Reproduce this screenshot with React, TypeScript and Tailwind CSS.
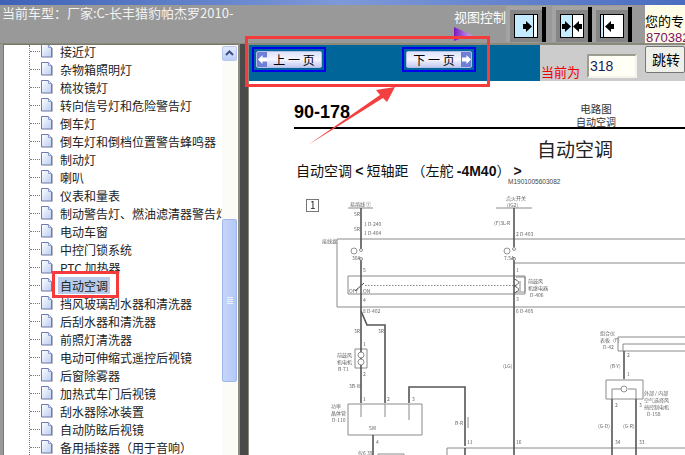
const treeItems = [
  "接近灯",
  "杂物箱照明灯",
  "梳妆镜灯",
  "转向信号灯和危险警告灯",
  "倒车灯",
  "倒车灯和倒档位置警告蜂鸣器",
  "制动灯",
  "喇叭",
  "仪表和量表",
  "制动警告灯、燃油滤清器警告灯",
  "电动车窗",
  "中控门锁系统",
  "PTC 加热器",
  "自动空调",
  "挡风玻璃刮水器和清洗器",
  "后刮水器和清洗器",
  "前照灯清洗器",
  "电动可伸缩式遥控后视镜",
  "后窗除雾器",
  "加热式车门后视镜",
  "刮水器除冰装置",
  "自动防眩后视镜",
  "备用插接器（用于音响）",
];

function PageIcon() {
  return (
    <svg width="13" height="14" viewBox="0 0 13 14" className="shrink-0">
      <defs>
        <linearGradient id="pg" x1="0" y1="0" x2="1" y2="1">
          <stop offset="0" stopColor="#ffffff" />
          <stop offset="1" stopColor="#b9cdf2" />
        </linearGradient>
      </defs>
      <path d="M1.5 0.5H8.5L11.5 3.5V13H1.5Z" fill="url(#pg)" stroke="#6c79b4" />
      <path d="M8.5 0.5V3.5H11.5" fill="#dfe7fa" stroke="#8f9ccc" />
      <path d="M2 13.5H12.5V4" fill="none" stroke="#b8b8c4" />
    </svg>
  );
}

function Tri({ dir }: { dir: string }) {
  return (
    <svg width="9" height="11" viewBox="0 0 9 11">
      {dir === "right" ? <path d="M0 3H3V0L9 5.5L3 11V8H0Z" fill="#000" /> : <path d="M9 3H6V0L0 5.5L6 11V8H9Z" fill="#000" />}
    </svg>
  );
}

function ViewButton({ kind }: { kind: string }) {
  return (
    <div className="relative w-[40px] h-[36px] bg-[#a3a3a3] pl-[4px] pt-[4px]">
      <div className="w-[32px] h-[32px] bg-[#858585] pl-[4px] pt-[4px]">
        <div className="flex w-[24px] h-[24px] border border-black bg-white">
          {kind === "split" && (
            <>
              <div className="flex-1 bg-[#c4ebff] flex items-center justify-center border-r border-black">
                <Tri dir="right" />
              </div>
              <div className="flex-1 bg-white flex items-center justify-center">
                <Tri dir="left" />
              </div>
            </>
          )}
          {kind === "wide" && (
            <>
              <div className="flex-1 bg-[#c4ebff] flex items-center justify-end pr-[1px] border-r border-black">
                <Tri dir="right" />
              </div>
              <div className="w-[3px] bg-white" />
            </>
          )}
          {kind === "narrow" && (
            <>
              <div className="w-[3px] bg-[#c4ebff] border-r border-black" />
              <div className="flex-1 bg-white flex items-center justify-start pl-[1px]">
                <Tri dir="left" />
              </div>
            </>
          )}
        </div>
      </div>
      <div className="absolute right-0 top-[1px] bottom-0 w-[4px] bg-black" />
    </div>
  );
}

function PagerButton({ label, prev }: { label: string; prev?: boolean }) {
  const arrow = (
    <div className="w-[10px] h-full bg-[#6f7fd8] flex items-center justify-center">
      <svg width="9" height="9" viewBox="0 0 9 9">
        {prev ? <path d="M0 4.5L4.5 0V2.5H9V6.5H4.5V9Z" fill="#fff" /> : <path d="M9 4.5L4.5 0V2.5H0V6.5H4.5V9Z" fill="#fff" />}
      </svg>
    </div>
  );
  return (
    <div className="w-[74px] h-[25px] border-[2px] border-[#0000ee] p-[2px] bg-[#006699]">
      <div className="flex items-center h-full rounded-[2px] border border-[#b5bde8] bg-gradient-to-b from-[#dfe3fb] via-[#f4f5fe] to-[#c3c9f0] overflow-hidden">
        {prev && arrow}
        <span className="flex-1 text-center text-[12px] leading-none text-black whitespace-pre">{label}</span>
        {!prev && arrow}
      </div>
    </div>
  );
}

function WiringDiagram() {
  const wire = "#555";
  const thin = "#8a8a8a";
  const label = { fontSize: 5, fill: "#666" };
  return (
    <svg width="436" height="265" viewBox="249 190 436 265" className="block mt-[5px] blur-[0.5px]">
      <rect x="306.5" y="198.5" width="12" height="12" fill="#fff" stroke="#777" />
      <text x="310" y="208" fontSize="10" fill="#222">1</text>

      <g fill="none" stroke={thin} strokeWidth="1">
        <path d="M348 207H373" />
        <path d="M337 306V238H685" />
        <path d="M337 306H685" />
        <path d="M525 293H348V275H525" />
        <path d="M525 275V293" />
        <path d="M355 348H367V367H355Z" />
        <path d="M348 403H422V434H348Z" />
        <path d="M447 455V447H685" />
        <path d="M496 207H532" />
        <path d="M514 262H685" />
        <path d="M685 336H618V350H685" />
        <path d="M623 350V343H685" />
        <path d="M606 379H643V398H606Z" />
        <path d="M612 388H623M628 388H636V398M612 388V398" />
        <path d="M378 455V453H404V455" />
        <path d="M364 282L355 290" stroke="#444" />
        <path d="M365 284.5H515" strokeDasharray="1.5 1.5" />
        <path d="M520 280V290M516 276H525V291H516" />
        <path d="M361 403V416M385 403V416M409 403V419" />
        <path d="M468 416V427" />
      </g>

      <g fill="none" stroke={wire} strokeWidth="1.6">
        <path d="M361 207V248M361 258V402" />
        <path d="M361 310L367 324H385V402" />
        <path d="M409 402V386H465V445" />
        <path d="M373 434V455" />
        <path d="M514 207V246M514 256V447" />
        <path d="M465 447V455M514 447V455M612 447V455M636 447V455" />
        <path d="M624 350V378" />
        <path d="M612 398V447M636 398V447" />
      </g>

      <g fill="#fff" stroke="#666" strokeWidth="0.7">
        <circle cx="361" cy="249" r="1.5" />
        <circle cx="361" cy="258" r="1.5" />
        <circle cx="514" cy="248" r="1.5" />
        <circle cx="514" cy="258" r="1.5" />
        <circle cx="354" cy="250" r="3" />
        <circle cx="507" cy="250" r="3" />
        <circle cx="361" cy="354" r="3" />
        <circle cx="361" cy="361" r="3" />
        <circle cx="624" cy="388" r="3" />
      </g>

      <path d="M514 278C520 280 520 283 514 285C520 287 520 290 514 292" fill="none" stroke="#555" />

      <g {...label} fontFamily="Noto Sans CJK SC, sans-serif">
        <text x="350" y="205">易熔线 ⑦</text>
        <text x="354" y="215">5R</text>
        <text x="354" y="230">5R</text>
        <text x="364" y="225">1 D-240</text>
        <text x="364" y="234">1 D-404</text>
        <text x="322" y="242">接线盒</text>
        <text x="352" y="259">30A</text>
        <text x="363" y="271">5</text>
        <text x="349" y="292">OFF</text>
        <text x="363" y="292">ON</text>
        <text x="363" y="301">4</text>
        <text x="363" y="312">8 D-402</text>
        <text x="354" y="332">3R</text>
        <text x="378" y="332">3R</text>
        <text x="363" y="345">1</text>
        <text x="337" y="356">前鼓风</text>
        <text x="337" y="363">机电机</text>
        <text x="338" y="370">B-71</text>
        <text x="363" y="375">2</text>
        <text x="349" y="387">3B-W</text>
        <text x="363" y="400">1</text>
        <text x="387" y="400">2</text>
        <text x="412" y="400">3</text>
        <text x="331" y="407">功率</text>
        <text x="331" y="414">晶体管</text>
        <text x="332" y="421">D-110</text>
        <text x="369" y="429">5W</text>
        <text x="376" y="443">4</text>
        <text x="358" y="454">仅6 39</text>
        <text x="455" y="424">B-R</text>
        <text x="467" y="443">11</text>
        <text x="506" y="199">点火开关</text>
        <text x="507" y="206">(IG2)</text>
        <text x="494" y="224">(F)3L-R</text>
        <text x="516" y="235">2 D-403</text>
        <text x="504" y="259">7.5A</text>
        <text x="516" y="271">1</text>
        <text x="528" y="282">前鼓风</text>
        <text x="528" y="289">机继电器</text>
        <text x="530" y="296">D-406</text>
        <text x="516" y="300">3</text>
        <text x="516" y="312">6 D-405</text>
        <text x="503" y="367">(LG)</text>
        <text x="516" y="443">16</text>
        <text x="600" y="334">组合仪</text>
        <text x="600" y="341">表板（F）</text>
        <text x="603" y="348">D-42</text>
        <text x="627" y="356">2</text>
        <text x="610" y="367">(B-Y)</text>
        <text x="627" y="375">1</text>
        <text x="644" y="394">外部 / 内部</text>
        <text x="644" y="401">空气选择风</text>
        <text x="644" y="408">挡控制电机</text>
        <text x="647" y="415">D-158</text>
        <text x="615" y="406">2</text>
        <text x="639" y="406">3</text>
        <text x="598" y="427">(G-D)</text>
        <text x="623" y="427">(G-R)</text>
        <text x="615" y="443">34</text>
        <text x="639" y="443">33</text>
      </g>
    </svg>
  );
}

export default function App() {
  return (
    <div className="relative w-[685px] h-[455px] overflow-hidden bg-[#999999] font-['Noto_Sans_CJK_SC','Noto_Sans',sans-serif]">
      <div className="h-[5px] bg-gradient-to-r from-[#3f62b8] via-[#7e99d8] to-[#4a6cc0]" />

      <div className="flex h-[38px]">
        <div className="w-[454px] pl-[2px] text-[13px] leading-[16px] text-[#f2f2f2] whitespace-nowrap">
          当前车型：厂家:C-长丰猎豹帕杰罗2010-
        </div>
        <div className="w-[52px] pt-[3px] text-[13px] leading-[18px] text-white whitespace-nowrap">视图控制</div>
        <div className="flex items-end h-[37px]">
          <ViewButton kind="wide" />
          <div className="w-[6px]" />
          <ViewButton kind="split" />
          <ViewButton kind="narrow" />
        </div>
        <div className="ml-[13px] flex-1 bg-[#fffde8] overflow-hidden text-[13px] leading-[17px] pt-[7px] whitespace-nowrap">
          <div className="text-black">您的专</div>
          <div className="pl-[1px] text-[#80106a] font-['Liberation_Sans',sans-serif]">870382</div>
        </div>
      </div>

      <div className="flex h-[412px] border-t border-[#8a8a78]">
        <div className="relative w-[235px] ml-[3px] border-l border-t border-[#77776a] bg-white flex overflow-hidden">
          <div className="relative flex-1 min-w-0 overflow-hidden">
            <div className="absolute left-[25px] top-0 bottom-0 border-l border-dotted border-[#777]" />
            <div className="-mt-[3px]">
              {treeItems.map((item) => (
                <div key={item} className="flex items-center h-[18px] pl-[26px]">
                  <div className="w-[10px] shrink-0 border-t border-dotted border-[#777]" />
                  <PageIcon />
                  <span
                    className={
                      item === "自动空调"
                        ? "ml-[5px] px-[2px] shrink-0 bg-[#b9cdea] text-[12px] leading-[17px] text-[#222] whitespace-nowrap"
                        : "ml-[7px] shrink-0 text-[12px] leading-[17px] text-[#222] whitespace-nowrap"
                    }
                  >
                    {item}
                  </span>
                </div>
              ))}
            </div>
          </div>
          <div className="flex flex-col w-[15px] shrink-0 mr-[1px] bg-[#fbfbf7]">
            <div className="h-[15px] mt-[1px] rounded-[2px] border border-[#b8c8ee] bg-gradient-to-b from-[#e3ebfd] to-[#bccdf6] flex items-center justify-center">
              <svg width="9" height="7" viewBox="0 0 9 7">
                <path d="M1 5L4.5 1.5L8 5" fill="none" stroke="#3c4f87" strokeWidth="2" />
              </svg>
            </div>
            <div className="h-[158px]" />
            <div className="flex flex-col items-center justify-center gap-[1px] h-[163px] rounded-[2px] border border-[#9fb6ea] bg-gradient-to-r from-[#c6d6fa] to-[#b3c8f6]">
              <div className="w-[6px] h-[1px] bg-[#eef2fd]" />
              <div className="w-[6px] h-[1px] bg-[#eef2fd]" />
              <div className="w-[6px] h-[1px] bg-[#eef2fd]" />
              <div className="w-[6px] h-[1px] bg-[#eef2fd]" />
            </div>
          </div>
        </div>

        <div className="w-[2px] bg-[#8c8c80]" />
        <div className="w-[8px] bg-[#4a4a4a]" />

        <div className="flex-1 min-w-0 border-l border-[#8a8a80] border-t">
          <div className="flex h-[36px] bg-[#006699]">
            <div className="flex items-start flex-1 pl-[3px] pt-[2px]">
              <PagerButton label="上 一 页" prev />
              <div className="w-[76px]" />
              <PagerButton label="下 一 页" />
            </div>
            <div className="relative w-[145px] bg-[#cccccc] flex items-start">
              <span className="mt-[18px] ml-[1px] text-[13px] leading-[18px] text-[#f00000] whitespace-nowrap">当前为</span>
              <div className="mt-[9px] ml-[7px] w-[53px] h-[24px] border-2 border-t-[#9c9c90] border-l-[#9c9c90] border-r-[#f4f4ea] border-b-[#f4f4ea] bg-[#fffff6] pl-[1px] text-[14px] leading-[20px] text-[#1a1a60] font-['Liberation_Sans',sans-serif]">
                318
              </div>
              <div className="mt-[1px] ml-[8px] w-[40px] h-[27px] shrink-0 border border-[#777] rounded-[2px] bg-[#f0f0ea] text-[14px] leading-[24px] pl-[6px] text-black whitespace-nowrap">
                跳转
              </div>
            </div>
          </div>

          <div className="h-[376px] bg-white overflow-hidden">
            <div className="flex h-[48px] ml-[45px] border-b-[2px] border-black">
              <div className="w-[279px] pt-[20px] text-[18px] leading-[22px] font-bold text-black font-['Liberation_Sans',sans-serif]">
                90-178
              </div>
              <div className="w-[46px] pt-[21px] text-center text-[#333] whitespace-nowrap">
                <div className="text-[10.5px] leading-[13px]">电路图</div>
                <div className="text-[10px] leading-[13px]">自动空调</div>
              </div>
            </div>
            <div className="ml-[288px] mt-[7px] text-[19px] leading-[26px] text-[#222] whitespace-nowrap">自动空调</div>
            <div className="ml-[47px] -mt-[1px] text-[14px] leading-[18px] text-[#111] whitespace-nowrap">
              自动空调 <b className="font-['Liberation_Sans',sans-serif]">&lt;</b> 短轴距 （左舵 <b className="font-['Liberation_Sans',sans-serif]">-4M40</b>） <b className="font-['Liberation_Sans',sans-serif]">&gt;</b>
            </div>
            <div className="ml-[259px] -mt-[2px] text-[6.5px] leading-[8px] text-[#444] font-['Liberation_Sans',sans-serif]">M1901005603082</div>
            <WiringDiagram />
          </div>
        </div>
      </div>

      {/* annotations drawn over the page */}
      <svg className="absolute left-0 top-0" width="685" height="455" viewBox="0 0 685 455">
        <defs>
          <linearGradient id="flag" x1="0" y1="0" x2="1" y2="0">
            <stop offset="0" stopColor="#7a18c0" />
            <stop offset="1" stopColor="#c9a6ee" />
          </linearGradient>
        </defs>
        <path d="M454 27L472 35L454 41Z" fill="url(#flag)" />
        <path d="M308 145L380 95L376 90L395 87L387 102L383 98Z" fill="#f23f3f" />
      </svg>
      <div className="absolute left-[245px] top-[36px] w-[245px] h-[51px] border-[3px] border-[#f53b3b]" />
      <div className="absolute left-[52px] top-[271px] w-[67px] h-[27px] border-[3px] border-[#f53b3b]" />
    </div>
  );
}
